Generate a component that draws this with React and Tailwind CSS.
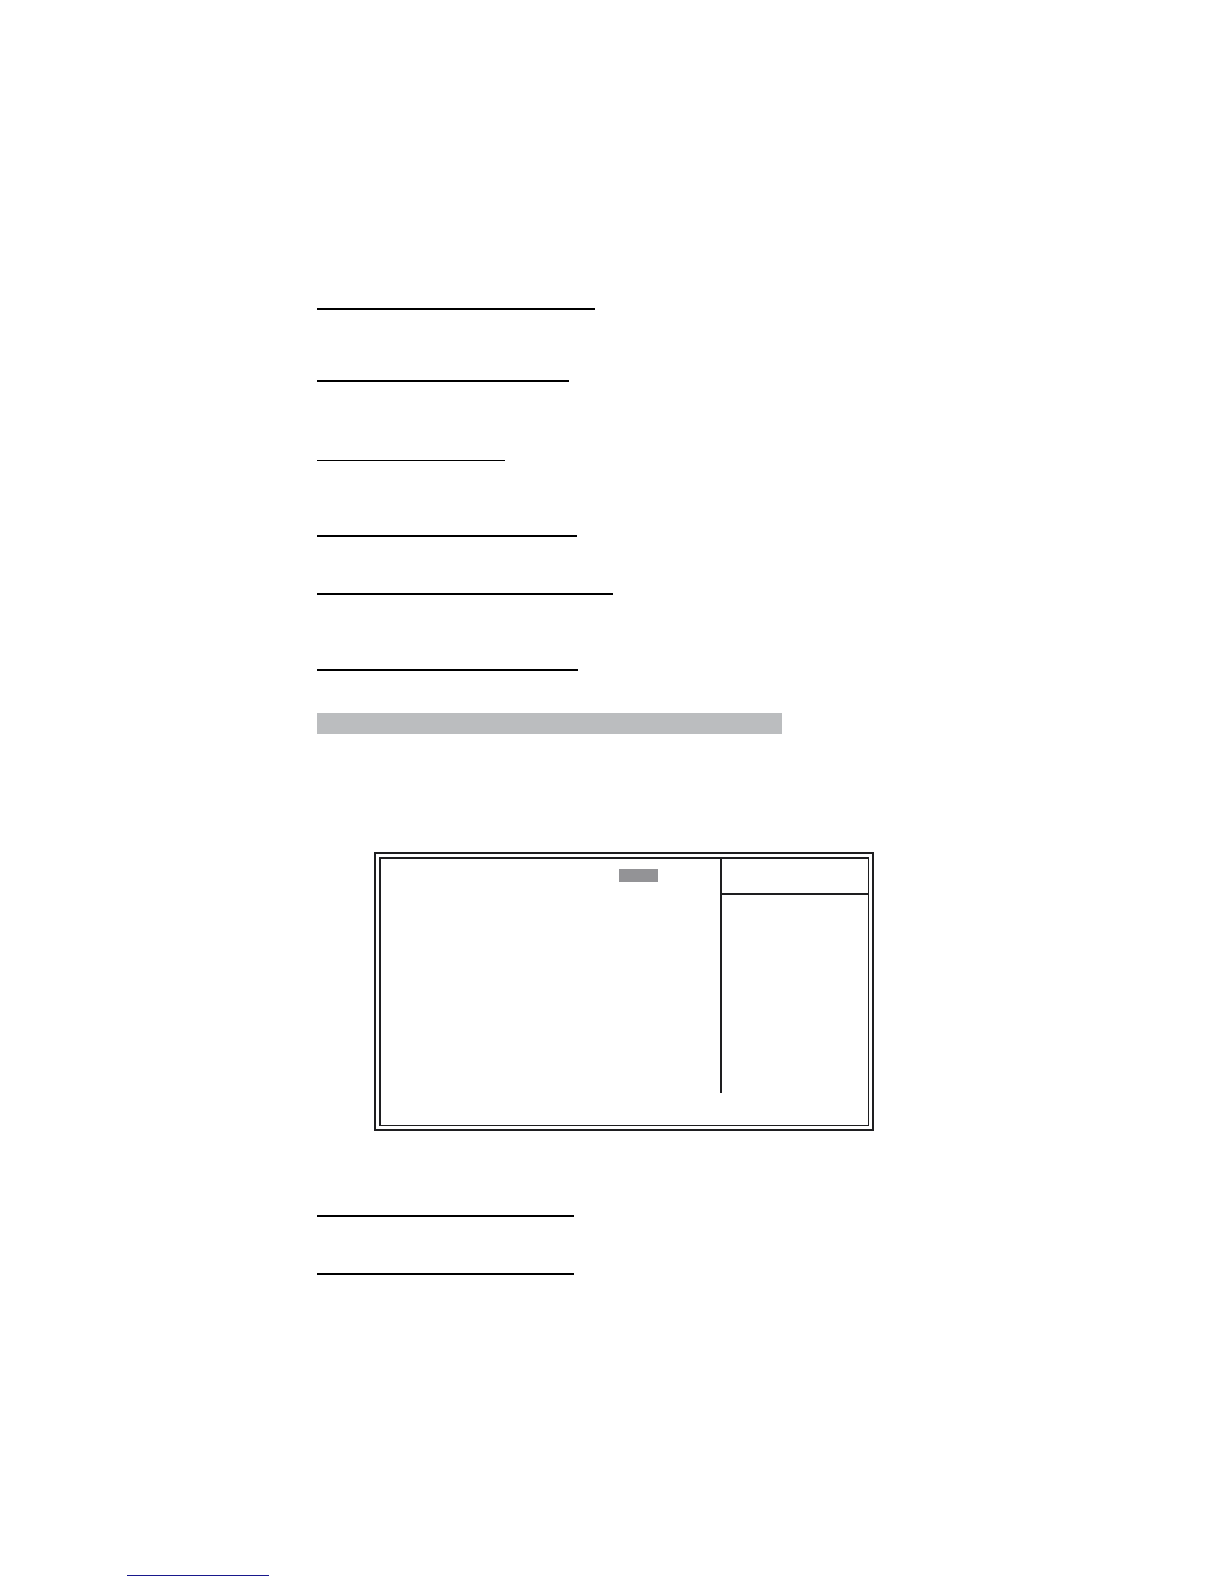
import React from 'react';

function Rule({ className }) {
  return <hr className={`max-w-full border-black ${className}`} />;
}

/**
 * Double-framed setup panel:
 * - left: the item list with one highlighted value
 * - right: a short header cell over the help area
 * - bottom: an open strip below the divider
 */
function SetupPanel() {
  return (
    <section className="ml-[57px] w-full max-w-[500px] border-2 border-[#1e1e20] p-[3px]">
      <div className="border-t-2 border-l-2 border-r border-b border-[#1e1e20] pb-8">
        <div className="flex">
          <div className="flex flex-1 justify-end pt-[10px] pr-[62px]">
            <div className="h-[13px] w-[39px] bg-[#939396]"></div>
          </div>
          <div className="min-h-[234px] w-[148px] border-l-2 border-[#1e1e20]">
            <div className="h-9 border-b-2 border-[#1e1e20]"></div>
          </div>
        </div>
      </div>
    </section>
  );
}

function App() {
  return (
    <div className="min-h-screen bg-white pt-[308px] pb-2">
      <main className="pl-[317px]">
        <Rule className="w-[278px] border-t-2" />
        <Rule className="mt-[70px] w-[252px] border-t-2" />
        <Rule className="mt-[78px] w-[188px]" />
        <Rule className="mt-[74px] w-[260px] border-t-2" />
        <Rule className="mt-14 w-[296px] border-t-2" />
        <Rule className="mt-[74px] w-[261px] border-t-2" />

        <div className="mt-[42px] mb-[118px] h-[21px] w-full max-w-[465px] bg-[#bbbdbf]"></div>

        <SetupPanel />

        <Rule className="mt-[84px] w-[257px] border-t-2" />
        <Rule className="mt-14 w-[257px] border-t-2" />
      </main>

      <footer className="mt-[300px] pl-[127px]">
        <hr className="w-[142px] border-[#18188c]" />
      </footer>
    </div>
  );
}

export default App;
